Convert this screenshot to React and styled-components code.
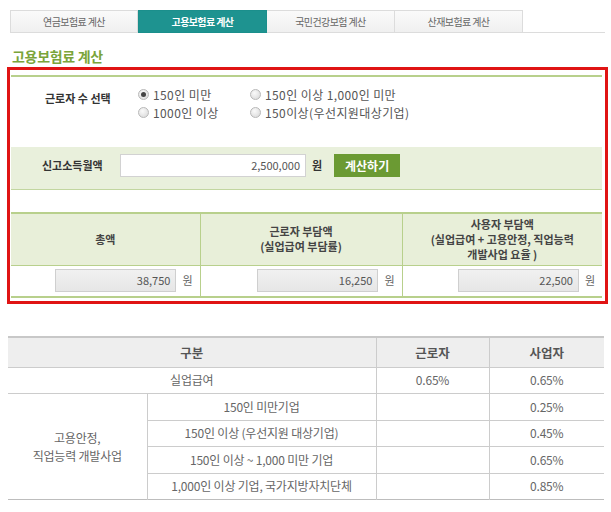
import React from "react";
import styled, { createGlobalStyle } from "styled-components";

const Global = createGlobalStyle`
  html, body { margin: 0; padding: 0; background: #fff; }
  body { font-family: "Noto Sans CJK KR", "Noto Sans", sans-serif; color: #555; }
  * { box-sizing: border-box; }
`;

const Page = styled.div`
  width: 611px;
  height: 512px;
  padding: 10px 0 0 7px;
  overflow: hidden;
`;

const TabBar = styled.div`
  display: flex;
  margin-left: 3px;
  width: 595px;
  height: 23px;
  border-bottom: 1px solid #dcdcdc;
`;

const Tab = styled.div`
  width: ${(p) => p.$w}px;
  height: 23px;
  display: flex;
  align-items: center;
  justify-content: center;
  font-size: 10px;
  letter-spacing: -0.6px;
  border: 1px solid ${(p) => (p.$active ? "#1b8f8c" : "#dcdcdc")};
  border-left: ${(p) => (p.$first || p.$active ? "1px" : "0")} solid ${(p) => (p.$active ? "#1b8f8c" : "#dcdcdc")};
  background: ${(p) => (p.$active ? "#1e9390" : "linear-gradient(#fafafa, #f0f0f0)")};
  color: ${(p) => (p.$active ? "#fff" : "#666")};
  font-weight: ${(p) => (p.$active ? 700 : 400)};
`;

const Title = styled.h2`
  margin: 15px 0 0 5px;
  font-size: 14px;
  line-height: 17px;
  font-weight: 700;
  color: #7aa43a;
  letter-spacing: -0.3px;
`;

const Highlight = styled.div`
  margin-top: 2px;
  width: 601px;
  border: 3px solid #e01414;
  padding: 5px 3px 3px 1px;
`;

const Form = styled.div`
  border-top: 2px solid #b8d08c;
`;

const RadioSection = styled.div`
  height: 70px;
  display: flex;
  align-items: flex-start;
  padding-top: 9px;
`;

const Label = styled.div`
  width: ${(p) => p.$w}px;
  padding-left: ${(p) => p.$pl}px;
  padding-top: ${(p) => p.$pt || 0}px;
  font-size: 11px;
  line-height: 17px;
  font-weight: 700;
  color: #333;
  white-space: nowrap;
`;

const RadioGrid = styled.div`
  display: grid;
  grid-template-columns: 112px auto;
  grid-auto-rows: 17.5px;
`;

const RadioItem = styled.label`
  display: flex;
  align-items: center;
  height: 17.5px;
  font-size: 12px;
  line-height: 17.5px;
  color: #555;
  white-space: nowrap;
  letter-spacing: 0.4px;
`;

const RadioDot = styled.span`
  width: 11px;
  height: 11px;
  flex: none;
  border-radius: 50%;
  border: 1px solid #b8b8b8;
  background: radial-gradient(circle at 40% 35%, #fafafa, #d6d6d6);
  margin-right: 4px;
  display: flex;
  align-items: center;
  justify-content: center;
  &::after {
    content: "";
    width: 5px;
    height: 5px;
    border-radius: 50%;
    background: ${(p) => (p.$on ? "#444" : "transparent")};
  }
`;

const IncomeRow = styled.div`
  height: 43px;
  background: #e9f0dc;
  border-bottom: 1px solid #c2d6a0;
  display: flex;
  align-items: flex-start;
  padding-top: 7px;
`;

const TextInput = styled.div`
  width: ${(p) => p.$w}px;
  height: 23px;
  border: 1px solid ${(p) => (p.$ro ? "#cfcfcf" : "#d2d2d2")};
  background: ${(p) => (p.$ro ? "linear-gradient(#f1f1f1, #e6e6e6)" : "#fff")};
  font-size: 11px;
  line-height: 21px;
  text-align: right;
  padding-right: 5px;
  color: #555;
`;

const Unit = styled.span`
  font-size: 11px;
  font-weight: ${(p) => (p.$bold ? 700 : 400)};
  color: ${(p) => (p.$bold ? "#333" : "#666")};
  margin-left: 6px;
  line-height: 23px;
`;

const Button = styled.button`
  margin-left: 12px;
  width: 66px;
  height: 23px;
  border: 0;
  background: #6b9a33;
  color: #fff;
  font-family: inherit;
  font-size: 12px;
  font-weight: 700;
  padding: 0;
`;

const Spacer = styled.div`
  height: 22px;
`;

const ResultTable = styled.table`
  width: 100%;
  border-collapse: collapse;
  table-layout: fixed;
  border-top: 2px solid #b8d08c;
  border-bottom: 2px solid #b8d08c;
`;

const RTh = styled.th`
  height: 52px;
  background: #e8efd9;
  font-size: 11px;
  line-height: 15px;
  font-weight: 700;
  color: #444;
  border-left: 1px solid #b8d08c;
  padding: 0;
  &:first-child { border-left: 0; }
`;

const RTd = styled.td`
  height: 32px;
  border-top: 1px solid #b8d08c;
  border-left: 1px solid #b8d08c;
  padding: 0 7px 0 0;
  &:first-child { border-left: 0; }
`;

const ValueBox = styled.div`
  display: flex;
  justify-content: flex-end;
  align-items: center;
`;

const RateTable = styled.table`
  margin: 32px 0 0 1px;
  width: 596px;
  border-collapse: collapse;
  table-layout: fixed;
  border-top: 2px solid #c8c8c8;
  border-bottom: 1px solid #bdbdbd;
`;

const Th = styled.th`
  height: 30px;
  background: #eeeeee;
  font-size: 12.5px;
  font-weight: 700;
  color: #555;
  padding: 0;
  border-bottom: 1px solid #cccccc;
  border-left: ${(p) => (p.$first ? "0" : "1px solid #cccccc")};
`;

const Td = styled.td`
  height: 26.5px;
  font-size: 12px;
  line-height: 18px;
  color: #666;
  text-align: center;
  padding: 0;
  border-top: 1px solid #cccccc;
  border-left: ${(p) => (p.$first ? "0" : "1px solid #cccccc")};
  letter-spacing: -0.2px;
`;

const tabs = [
  { t: "연금보험료 계산", w: 128 },
  { t: "고용보험료 계산", w: 129, active: true },
  { t: "국민건강보험 계산", w: 128 },
  { t: "산재보험료 계산", w: 128 },
];

const radios = [
  { t: "150인 미만", on: true },
  { t: "150인 이상 1,000인 미만" },
  { t: "1000인 이상" },
  { t: "150이상(우선지원대상기업)" },
];

const results = ["38,750", "16,250", "22,500"];

const sub = [
  ["150인 미만기업", "0.25%"],
  ["150인 이상 (우선지원 대상기업)", "0.45%"],
  ["150인 이상 ~ 1,000 미만 기업", "0.65%"],
  ["1,000인 이상 기업, 국가지방자치단체", "0.85%"],
];

export default function App() {
  return (
    <>
      <Global />
      <Page>
        <TabBar>
          {tabs.map((t, i) => (
            <Tab key={t.t} $w={t.w} $active={t.active} $first={i === 0}>
              {t.t}
            </Tab>
          ))}
        </TabBar>
        <Title>고용보험료 계산</Title>
        <Highlight>
          <Form>
            <RadioSection>
              <Label $w={127} $pl={34} $pt={4}>근로자 수 선택</Label>
              <RadioGrid>
                {radios.map((r) => (
                  <RadioItem key={r.t}>
                    <RadioDot $on={r.on} />
                    {r.t}
                  </RadioItem>
                ))}
              </RadioGrid>
            </RadioSection>
            <IncomeRow>
              <Label $w={109} $pl={31} $pt={3}>신고소득월액</Label>
              <TextInput $w={186}>2,500,000</TextInput>
              <Unit $bold>원</Unit>
              <Button>계산하기</Button>
            </IncomeRow>
            <Spacer />
            <ResultTable>
              <colgroup>
                <col style={{ width: 189 }} />
                <col style={{ width: 202 }} />
                <col />
              </colgroup>
              <thead>
                <tr>
                  <RTh>총액</RTh>
                  <RTh>
                    근로자 부담액
                    <br />
                    (실업급여 부담률)
                  </RTh>
                  <RTh>
                    사용자 부담액
                    <br />
                    (실업급여 + 고용안정, 직업능력
                    <br />
                    개발사업 요율 )
                  </RTh>
                </tr>
              </thead>
              <tbody>
                <tr>
                  {results.map((v) => (
                    <RTd key={v}>
                      <ValueBox>
                        <TextInput $w={121} $ro>{v}</TextInput>
                        <Unit>원</Unit>
                      </ValueBox>
                    </RTd>
                  ))}
                </tr>
              </tbody>
            </ResultTable>
          </Form>
        </Highlight>
        <RateTable>
          <colgroup>
            <col style={{ width: 139 }} />
            <col style={{ width: 229 }} />
            <col style={{ width: 113 }} />
            <col />
          </colgroup>
          <thead>
            <tr>
              <Th colSpan={2} $first>구분</Th>
              <Th>근로자</Th>
              <Th>사업자</Th>
            </tr>
          </thead>
          <tbody>
            <tr>
              <Td colSpan={2} $first>실업급여</Td>
              <Td>0.65%</Td>
              <Td>0.65%</Td>
            </tr>
            {sub.map(([name, rate], i) => (
              <tr key={name}>
                {i === 0 && (
                  <Td rowSpan={4} $first>
                    고용안정,
                    <br />
                    직업능력 개발사업
                  </Td>
                )}
                <Td>{name}</Td>
                <Td></Td>
                <Td>{rate}</Td>
              </tr>
            ))}
          </tbody>
        </RateTable>
      </Page>
    </>
  );
}
